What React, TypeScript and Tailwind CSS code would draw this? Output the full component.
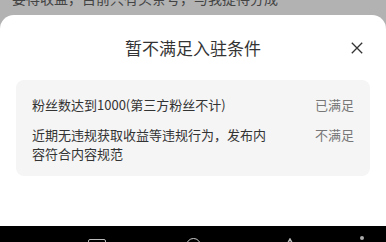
import React from "react";

const font = { fontFamily: '"Noto Sans CJK SC", "Noto Sans", sans-serif' };

export default function App() {
  return (
    <div
      className="w-[386px] h-[242px] bg-[#b2b2b2] flex flex-col overflow-hidden"
      style={font}
    >
      <div className="h-[15px] overflow-hidden px-[12px]">
        <p className="text-[14px] leading-[20px] mt-[-12px] text-[#444444] whitespace-nowrap">
          要得收益，目前只有头条号，与我提待分成
        </p>
      </div>
      <div className="flex-1 bg-white rounded-t-[14px] flex flex-col">
        <div className="h-[65px] relative flex items-center justify-center">
          <span className="text-[17px] text-[#333333] leading-none">暂不满足入驻条件</span>
          <svg
            className="absolute right-[23px] top-[27px]"
            width="12"
            height="12"
            viewBox="0 0 12 12"
          >
            <path d="M0.8 0.8 L11.2 11.2 M11.2 0.8 L0.8 11.2" stroke="#333" strokeWidth="1.3" fill="none" />
          </svg>
        </div>
        <div className="mx-[16px] rounded-[8px] bg-[#f5f5f5] pl-[16px] pr-[16px] pt-[15px] pb-[13px] flex flex-col gap-[10px]">
          <div className="flex justify-between items-start">
            <span className="w-[236px] text-[13px] leading-[20px] text-[#333333]">
              粉丝数达到1000(第三方粉丝不计)
            </span>
            <span className="text-[13px] leading-[20px] text-[#777777]">已满足</span>
          </div>
          <div className="flex justify-between items-start">
            <span className="w-[236px] text-[13px] leading-[19px] text-[#333333]">
              近期无违规获取收益等违规行为，发布内容符合内容规范
            </span>
            <span className="text-[13px] leading-[20px] text-[#777777]">不满足</span>
          </div>
        </div>
      </div>
      <div className="h-[16px] bg-black relative overflow-hidden">
        <div className="absolute left-[88px] top-[13px] w-[18px] h-[12px] border-[1.5px] border-[#bbbbbb] rounded-[2px]" />
        <div className="absolute left-[186px] top-[12px] w-[15px] h-[15px] border-[1.5px] border-[#cccccc] rounded-full" />
        <svg className="absolute left-[282px] top-[12px]" width="16" height="16" viewBox="0 0 16 16">
          <path d="M8 1 L15 14 L1 14 Z" stroke="#bbbbbb" strokeWidth="1.5" fill="none" />
        </svg>
        <div className="absolute left-[360px] top-[10px] w-[4px] h-[4px] bg-[#aaaaaa] rounded-full" />
      </div>
    </div>
  );
}
